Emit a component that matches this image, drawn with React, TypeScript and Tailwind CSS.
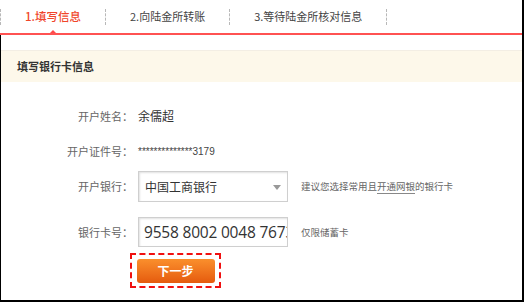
import React from "react";

const cjk = "font-['Noto_Sans_CJK_SC','Noto_Sans',sans-serif]";

interface Tab {
    label: string;
    active?: boolean;
}

const tabs: Tab[] = [
    {label: "1.填写信息", active: true},
    {label: "2.向陆金所转账"},
    {label: "3.等待陆金所核对信息"},
];

const Sep: React.FC = () => (
    <div className="h-[16px] border-l border-dashed border-[#b8b8b8]"/>
);

const Row: React.FC<{ label: string; className?: string; children: React.ReactNode }> = ({label, className, children}) => (
    <div className={"flex items-center " + (className ?? "")}>
        <div className="w-[132px] text-right text-[11px] text-[#666]">{label}</div>
        <div className="ml-[5px] flex items-center">{children}</div>
    </div>
);

export default function App() {
    return (
        <div className={"relative w-[524px] h-[302px] bg-white border-r-2 border-b-2 border-black flex flex-col " + cjk}>
            {/* step tabs */}
            <div className="h-[33px] flex items-center">
                <Sep/>
                {tabs.map((tab, i) => (
                    <React.Fragment key={i}>
                        <div className="relative h-full px-6 flex items-center">
                            <span className={tab.active ? "text-[11.5px] font-medium text-[#f0452a]" : "text-[11px] text-[#444]"}>
                                {tab.label}
                            </span>
                            {tab.active && (
                                <span className="absolute bottom-0 left-1/2 -translate-x-1/2 w-0 h-0 border-x-[3px] border-x-transparent border-b-[3px] border-b-[#ff4a4a]"/>
                            )}
                        </div>
                        <Sep/>
                    </React.Fragment>
                ))}
            </div>
            <div className="h-[2px] bg-[#ff5252]"/>

            <div className="flex-1 border-l border-black flex flex-col">
                <div className="mt-[15px] h-[32px] bg-[#fdf8ea] border-t border-[#f3eee4] flex items-center pl-[16px]">
                    <span className="text-[11px] font-bold text-[#333]">填写银行卡信息</span>
                </div>

                <Row label="开户姓名：" className="mt-[24px] h-[20px]">
                    <span className="text-[12px] text-[#333]">余儒超</span>
                </Row>

                <Row label="开户证件号：" className="mt-[15px] h-[20px]">
                    <span className="text-[10px] text-[#444] font-['Liberation_Sans',sans-serif]">**************3179</span>
                </Row>

                <Row label="开户银行：" className="mt-[10px] h-[31px]">
                    <div className="relative w-[150px] h-[31px] border border-[#cfcfcf] shadow-[inset_1px_1px_2px_rgba(0,0,0,0.12)] flex items-center pl-[6px]">
                        <span className="text-[12px] text-[#333]">中国工商银行</span>
                        <span className="absolute right-[6px] top-[13px] w-0 h-0 border-x-[4px] border-x-transparent border-t-[5px] border-t-[#999]"/>
                    </div>
                    <span className="ml-[13px] text-[9.5px] text-[#666] whitespace-nowrap">
                        建议您选择常用且<span className="border-b border-[#888]">开通网银</span>的银行卡
                    </span>
                </Row>

                <Row label="银行卡号：" className="mt-[15px] h-[30px]">
                    <input
                        readOnly
                        value="9558 8002 0048 7673 179"
                        className="w-[150px] h-[30px] border border-[#cfcfcf] shadow-[inset_1px_1px_2px_rgba(0,0,0,0.12)] pl-[5px] pr-0 outline-none text-[15.5px] text-[#333] tracking-[-0.2px] font-['Open_Sans',sans-serif]"
                    />
                    <span className="ml-[13px] text-[9.5px] text-[#666]">仅限储蓄卡</span>
                </Row>

                <div className="mt-[6px] ml-[129px] w-[91px] h-[35px] border-2 border-dashed border-[#f01010] flex items-center justify-center">
                    <button className="w-[78px] h-[24px] rounded-[3px] bg-gradient-to-b from-[#fa8f2c] to-[#e55a0c] text-white text-[12px] font-bold">
                        下一步
                    </button>
                </div>
            </div>
        </div>
    );
}
